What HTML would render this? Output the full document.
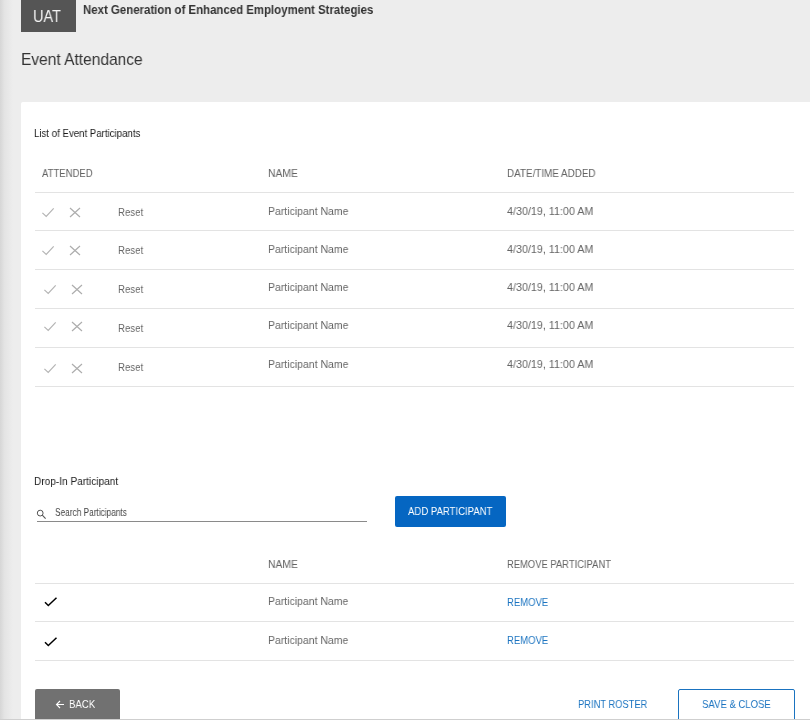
<!DOCTYPE html>
<html><head><meta charset="utf-8"><style>
html,body{margin:0;padding:0;}
body{width:810px;height:720px;overflow:hidden;position:relative;background:#ededed;font-family:"Liberation Sans",sans-serif;}
#shadow{position:absolute;left:0;top:0;width:13px;height:720px;background:linear-gradient(to right,#d6d6d6,#e4e4e4 35%,#ededed);}
#uatbox{position:absolute;left:21px;top:0;width:55px;height:32px;background:#555555;}
#card{position:absolute;left:21px;top:102px;width:800px;height:640px;background:#ffffff;border-radius:2px;}
.ln{position:absolute;height:1px;}
.ic{position:absolute;overflow:visible;}
.tx{position:absolute;white-space:nowrap;line-height:normal;transform-origin:0 0;will-change:transform;}
#addbtn{position:absolute;left:395px;top:496px;width:111.4px;height:31px;background:#0566c2;border-radius:2px;}
#backbtn{position:absolute;left:35px;top:689px;width:85px;height:40px;background:#717171;border-radius:2px;}
#savebtn{position:absolute;left:678px;top:689px;width:115px;height:40px;border:1px solid #1a73c0;border-radius:2px;background:#fff;}
#botline{position:absolute;left:0;top:719px;width:810px;height:1px;background:#cfcfcf;}
</style></head><body>
<div id="shadow"></div>
<div id="uatbox"></div>
<div id="card"></div>
<div class="ln" style="left:35px;top:192px;width:759px;background:#e3e3e3"></div>
<div class="ln" style="left:35px;top:230px;width:759px;background:#e3e3e3"></div>
<div class="ln" style="left:35px;top:269px;width:759px;background:#e3e3e3"></div>
<div class="ln" style="left:35px;top:308px;width:759px;background:#e3e3e3"></div>
<div class="ln" style="left:35px;top:347px;width:759px;background:#e3e3e3"></div>
<div class="ln" style="left:35px;top:386px;width:759px;background:#e3e3e3"></div>
<div class="ln" style="left:35px;top:583px;width:759px;background:#e3e3e3"></div>
<div class="ln" style="left:35px;top:621px;width:759px;background:#e3e3e3"></div>
<div class="ln" style="left:35px;top:660px;width:759px;background:#e3e3e3"></div>
<svg class="ic" style="left:41px;top:207px" width="14" height="11" viewBox="0 0 14 11"><path d="M1.4 5.9 L5.2 9.4 L12.7 1.3" fill="none" stroke="#b4b4b4" stroke-width="1.2"/></svg>
<svg class="ic" style="left:69px;top:207px" width="12" height="11" viewBox="0 0 12 11"><path d="M1 1 L11 10 M11 1 L1 10" fill="none" stroke="#adadad" stroke-width="1.2"/></svg>
<svg class="ic" style="left:41px;top:245px" width="14" height="11" viewBox="0 0 14 11"><path d="M1.4 5.9 L5.2 9.4 L12.7 1.3" fill="none" stroke="#b4b4b4" stroke-width="1.2"/></svg>
<svg class="ic" style="left:69px;top:245px" width="12" height="11" viewBox="0 0 12 11"><path d="M1 1 L11 10 M11 1 L1 10" fill="none" stroke="#adadad" stroke-width="1.2"/></svg>
<svg class="ic" style="left:43px;top:284px" width="14" height="11" viewBox="0 0 14 11"><path d="M1.4 5.9 L5.2 9.4 L12.7 1.3" fill="none" stroke="#b4b4b4" stroke-width="1.2"/></svg>
<svg class="ic" style="left:71px;top:284px" width="12" height="11" viewBox="0 0 12 11"><path d="M1 1 L11 10 M11 1 L1 10" fill="none" stroke="#adadad" stroke-width="1.2"/></svg>
<svg class="ic" style="left:43px;top:321px" width="14" height="11" viewBox="0 0 14 11"><path d="M1.4 5.9 L5.2 9.4 L12.7 1.3" fill="none" stroke="#b4b4b4" stroke-width="1.2"/></svg>
<svg class="ic" style="left:71px;top:321px" width="12" height="11" viewBox="0 0 12 11"><path d="M1 1 L11 10 M11 1 L1 10" fill="none" stroke="#adadad" stroke-width="1.2"/></svg>
<svg class="ic" style="left:43px;top:363px" width="14" height="11" viewBox="0 0 14 11"><path d="M1.4 5.9 L5.2 9.4 L12.7 1.3" fill="none" stroke="#b4b4b4" stroke-width="1.2"/></svg>
<svg class="ic" style="left:71px;top:363px" width="12" height="11" viewBox="0 0 12 11"><path d="M1 1 L11 10 M11 1 L1 10" fill="none" stroke="#adadad" stroke-width="1.2"/></svg>
<svg class="ic" style="left:44px;top:597px" width="14" height="11" viewBox="0 0 14 11"><path d="M1 5.3 L4.3 8.5 L12.5 0.7" fill="none" stroke="#000000" stroke-width="1.5"/></svg>
<svg class="ic" style="left:43.5px;top:636.5px" width="14" height="11" viewBox="0 0 14 11"><path d="M1 5.3 L4.3 8.5 L12.5 0.7" fill="none" stroke="#000000" stroke-width="1.5"/></svg>
<svg class="ic" style="left:36px;top:509px" width="12" height="12" viewBox="0 0 12 12"><circle cx="4.2" cy="4.1" r="2.9" fill="none" stroke="#555" stroke-width="1"/><path d="M6.3 6.2 L9.6 9.6" stroke="#555" stroke-width="1.1"/></svg>
<div class="ln" style="left:37px;top:521px;width:330px;background:#8a8a8a"></div>
<div id="addbtn"></div>
<div id="backbtn"></div>
<svg class="ic" style="left:55px;top:700px" width="10" height="9" viewBox="0 0 10 9"><path d="M9 4.5 H1.5 M5 1 L1.5 4.5 L5 8" fill="none" stroke="#fff" stroke-width="1.1"/></svg>
<div id="savebtn"></div>
<div id="botline"></div>
<div class="tx" id="uat" style="left:32.68px;top:7.20px;font-size:16.57px;letter-spacing:0.000px;transform:scaleX(0.8742);color:#f4f4f4;font-weight:400">UAT</div>
<div class="tx" id="title" style="left:83.46px;top:3.49px;font-size:12.50px;letter-spacing:0.000px;transform:scaleX(0.9146);color:#333333;font-weight:700">Next Generation of Enhanced Employment Strategies</div>
<div class="tx" id="h1" style="left:20.60px;top:49.61px;font-size:17.01px;letter-spacing:0.000px;transform:scaleX(0.9129);color:#333333;font-weight:400">Event Attendance</div>
<div class="tx" id="list" style="left:33.52px;top:127.00px;font-size:11.05px;letter-spacing:0.000px;transform:scaleX(0.8748);color:#1a1a1a;font-weight:400">List of Event Participants</div>
<div class="tx" id="hAtt" style="left:42.47px;top:167.00px;font-size:11.05px;letter-spacing:0.000px;transform:scaleX(0.8633);color:#626262;font-weight:400">ATTENDED</div>
<div class="tx" id="hName" style="left:268.29px;top:167.00px;font-size:11.05px;letter-spacing:0.000px;transform:scaleX(0.9380);color:#626262;font-weight:400">NAME</div>
<div class="tx" id="hDate" style="left:507.19px;top:167.00px;font-size:11.05px;letter-spacing:0.000px;transform:scaleX(0.8918);color:#626262;font-weight:400">DATE/TIME ADDED</div>
<div class="tx" id="reset0" style="left:117.97px;top:205.74px;font-size:11.34px;letter-spacing:0.000px;transform:scaleX(0.8474);color:#666666;font-weight:400">Reset</div>
<div class="tx" id="pn0" style="left:268.20px;top:204.48px;font-size:11.63px;letter-spacing:0.000px;transform:scaleX(0.9018);color:#666666;font-weight:400">Participant Name</div>
<div class="tx" id="dt0" style="left:506.64px;top:204.48px;font-size:11.63px;letter-spacing:0.000px;transform:scaleX(0.9246);color:#666666;font-weight:400">4/30/19, 11:00 AM</div>
<div class="tx" id="reset1" style="left:117.97px;top:243.74px;font-size:11.34px;letter-spacing:0.000px;transform:scaleX(0.8474);color:#666666;font-weight:400">Reset</div>
<div class="tx" id="pn1" style="left:268.20px;top:242.48px;font-size:11.63px;letter-spacing:0.000px;transform:scaleX(0.9018);color:#666666;font-weight:400">Participant Name</div>
<div class="tx" id="dt1" style="left:506.64px;top:242.48px;font-size:11.63px;letter-spacing:0.000px;transform:scaleX(0.9246);color:#666666;font-weight:400">4/30/19, 11:00 AM</div>
<div class="tx" id="reset2" style="left:117.97px;top:282.74px;font-size:11.34px;letter-spacing:0.000px;transform:scaleX(0.8474);color:#666666;font-weight:400">Reset</div>
<div class="tx" id="pn2" style="left:268.20px;top:280.48px;font-size:11.63px;letter-spacing:0.000px;transform:scaleX(0.9018);color:#666666;font-weight:400">Participant Name</div>
<div class="tx" id="dt2" style="left:506.64px;top:280.48px;font-size:11.63px;letter-spacing:0.000px;transform:scaleX(0.9246);color:#666666;font-weight:400">4/30/19, 11:00 AM</div>
<div class="tx" id="reset3" style="left:117.97px;top:321.74px;font-size:11.34px;letter-spacing:0.000px;transform:scaleX(0.8474);color:#666666;font-weight:400">Reset</div>
<div class="tx" id="pn3" style="left:268.20px;top:318.48px;font-size:11.63px;letter-spacing:0.000px;transform:scaleX(0.9018);color:#666666;font-weight:400">Participant Name</div>
<div class="tx" id="dt3" style="left:506.64px;top:318.48px;font-size:11.63px;letter-spacing:0.000px;transform:scaleX(0.9246);color:#666666;font-weight:400">4/30/19, 11:00 AM</div>
<div class="tx" id="reset4" style="left:117.97px;top:360.74px;font-size:11.34px;letter-spacing:0.000px;transform:scaleX(0.8474);color:#666666;font-weight:400">Reset</div>
<div class="tx" id="pn4" style="left:268.20px;top:357.48px;font-size:11.63px;letter-spacing:0.000px;transform:scaleX(0.9018);color:#666666;font-weight:400">Participant Name</div>
<div class="tx" id="dt4" style="left:506.64px;top:357.48px;font-size:11.63px;letter-spacing:0.000px;transform:scaleX(0.9246);color:#666666;font-weight:400">4/30/19, 11:00 AM</div>
<div class="tx" id="drop" style="left:33.78px;top:474.74px;font-size:11.34px;letter-spacing:0.000px;transform:scaleX(0.8907);color:#222222;font-weight:400">Drop-In Participant</div>
<div class="tx" id="search" style="left:55.11px;top:506.92px;font-size:10.03px;letter-spacing:0.000px;transform:scaleX(0.8279);color:#444444;font-weight:400">Search Participants</div>
<div class="tx" id="add" style="left:408.33px;top:503.58px;font-size:11.63px;letter-spacing:0.000px;transform:scaleX(0.8223);color:#ffffff;font-weight:400">ADD PARTICIPANT</div>
<div class="tx" id="bName" style="left:268.29px;top:557.80px;font-size:11.05px;letter-spacing:0.000px;transform:scaleX(0.9380);color:#626262;font-weight:400">NAME</div>
<div class="tx" id="bRem" style="left:507.30px;top:557.80px;font-size:11.05px;letter-spacing:0.000px;transform:scaleX(0.8510);color:#626262;font-weight:400">REMOVE PARTICIPANT</div>
<div class="tx" id="bpn0" style="left:268.00px;top:594.48px;font-size:11.63px;letter-spacing:0.000px;transform:scaleX(0.9000);color:#666666;font-weight:400">Participant Name</div>
<div class="tx" id="brem0" style="left:507.30px;top:596.00px;font-size:11.05px;letter-spacing:0.000px;transform:scaleX(0.8606);color:#1a73c0;font-weight:400">REMOVE</div>
<div class="tx" id="bpn1" style="left:268.00px;top:632.78px;font-size:11.63px;letter-spacing:0.000px;transform:scaleX(0.9000);color:#666666;font-weight:400">Participant Name</div>
<div class="tx" id="brem1" style="left:507.30px;top:634.00px;font-size:11.05px;letter-spacing:0.000px;transform:scaleX(0.8606);color:#1a73c0;font-weight:400">REMOVE</div>
<div class="tx" id="back" style="left:69.41px;top:697.48px;font-size:11.63px;letter-spacing:0.000px;transform:scaleX(0.8257);color:#ffffff;font-weight:400">BACK</div>
<div class="tx" id="print" style="left:577.61px;top:697.48px;font-size:11.63px;letter-spacing:0.000px;transform:scaleX(0.8029);color:#1a73c0;font-weight:400">PRINT ROSTER</div>
<div class="tx" id="save" style="left:702.14px;top:697.48px;font-size:11.63px;letter-spacing:0.000px;transform:scaleX(0.8209);color:#1a73c0;font-weight:400">SAVE &amp; CLOSE</div>
</body></html>
